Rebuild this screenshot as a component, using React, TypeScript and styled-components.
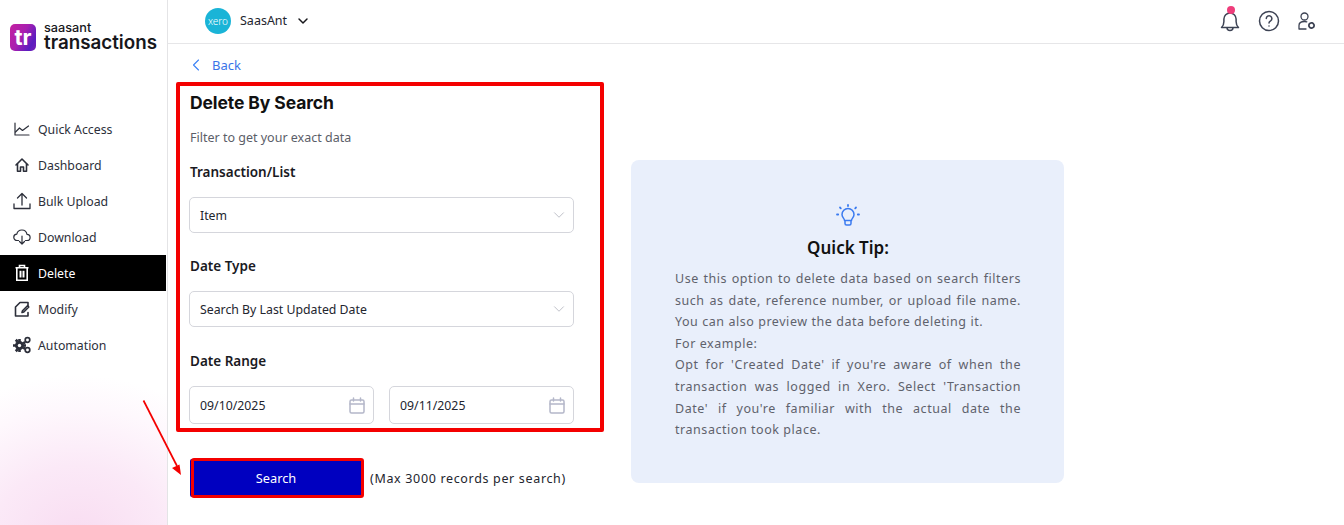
import styled, { createGlobalStyle } from "styled-components";
import { ReactNode } from "react";
import { ChevronDown, ChevronLeft } from "lucide-react";

const GlobalStyle = createGlobalStyle`
  html, body {
    margin: 0;
    padding: 0;
    background: #fff;
    font-family: "Noto Sans", "Open Sans", sans-serif;
    color: #1c1c22;
  }
  * { box-sizing: border-box; }
`;

const Page = styled.div`
  position: relative;
  display: flex;
  width: 1344px;
  height: 525px;
  overflow: hidden;
`;

const Sidebar = styled.aside`
  flex: 0 0 168px;
  display: flex;
  flex-direction: column;
  border-right: 1px solid #e4e4e6;
  background: radial-gradient(ellipse 190px 165px at 78px 540px, #f8dcf1 0%, #fbe9f7 45%, #fef8fd 80%, #fff 100%);
`;

const LogoRow = styled.div`
  display: flex;
  align-items: center;
  gap: 8px;
  height: 111px;
  padding: 0 0 37px 10px;
`;

const LogoMark = styled.div`
  display: flex;
  align-items: center;
  justify-content: center;
  width: 26px;
  height: 27px;
  padding-bottom: 1px;
  border-radius: 5px;
  background: linear-gradient(120deg, #c4209f 0%, #a81fb0 45%, #5a1dc0 80%, #7a1fb4 100%);
  color: #fff;
  font-family: Inter, sans-serif;
  font-weight: 700;
  font-size: 22px;
  line-height: 1;
`;

const LogoText = styled.div`
  display: flex;
  flex-direction: column;
  font-family: Inter, sans-serif;
  color: #17171c;
`;

const LogoSmall = styled.span`
  font-size: 12.7px;
  font-weight: 500;
  line-height: 10px;
`;

const LogoBig = styled.span`
  font-size: 18.8px;
  font-weight: 600;
  line-height: 19px;
`;

const Nav = styled.nav`
  display: flex;
  flex-direction: column;
`;

const NavItem = styled.div<{ $active?: boolean }>`
  display: flex;
  align-items: center;
  gap: 7px;
  height: 36px;
  margin-right: 1px;
  padding-left: 13px;
  font-size: 12.3px;
  background: ${(p) => (p.$active ? "#000" : "transparent")};
  color: ${(p) => (p.$active ? "#fff" : "#2c2f3a")};
`;

const NavIcon = styled.span`
  display: flex;
  align-items: center;
  justify-content: center;
  width: 18px;
  height: 18px;
`;

const Main = styled.main`
  flex: 1;
  display: flex;
  flex-direction: column;
  min-width: 0;
`;

const TopBar = styled.header`
  display: flex;
  align-items: center;
  justify-content: space-between;
  height: 44px;
  padding: 0 28px 2px 37px;
  border-bottom: 1px solid #e6e6e8;
`;

const OrgSwitch = styled.div`
  display: flex;
  align-items: center;
  font-size: 12.5px;
  color: #23252e;
`;

const XeroBadge = styled.div`
  display: flex;
  align-items: center;
  justify-content: center;
  width: 26px;
  height: 26px;
  margin-right: 9px;
  border-radius: 50%;
  background: #1ab4d7;
  color: #fff;
  font-size: 10px;
  font-weight: 300;
  line-height: 1;
`;

const OrgChevron = styled(ChevronDown)`
  margin-left: 8px;
`;

const TopActions = styled.div`
  display: flex;
  align-items: center;
  gap: 18px;
`;

const BellWrap = styled.div`
  position: relative;
  display: flex;
  width: 20px;
  height: 24px;
  margin-top: 1px;
`;

const BellDot = styled.span`
  position: absolute;
  top: -3px;
  left: 7px;
  width: 8px;
  height: 8px;
  border-radius: 50%;
  background: #ef3d7b;
`;

const Content = styled.div`
  display: flex;
  flex: 1;
  padding: 0 0 0 8px;
`;

const LeftColumn = styled.div`
  display: flex;
  flex-direction: column;
  width: 428px;
`;

const BackLink = styled.div`
  display: flex;
  align-items: center;
  gap: 6px;
  height: 38px;
  padding: 4px 0 0 10px;
  font-size: 13px;
  color: #3a74e8;
`;

const FormBox = styled.section`
  display: flex;
  flex-direction: column;
  height: 350px;
  padding: 4px 26px 0 9px;
  border: 4px solid #f40000;
  border-radius: 2px;
`;

const Title = styled.h1`
  margin: 0 0 0 1px;
  font-family: Inter, sans-serif;
  font-size: 17.5px;
  font-weight: 700;
  letter-spacing: -0.1px;
  line-height: 26px;
  color: #111;
`;

const Subtitle = styled.p`
  margin: 12px 0 0 1px;
  font-size: 12.5px;
  line-height: 20px;
  color: #5b5e68;
`;

const FieldLabel = styled.label<{ $gap: number }>`
  display: block;
  margin: ${(p) => p.$gap}px 0 0 1px;
  font-size: 13.5px;
  font-weight: 600;
  line-height: 20px;
  color: #1a1a1f;
`;

const Select = styled.div`
  display: flex;
  align-items: center;
  justify-content: space-between;
  height: 36px;
  margin-top: 15px;
  padding: 0 5px 0 10px;
  border: 1px solid #d5d6dc;
  border-radius: 5px;
  background: #fff;
  font-size: 12.3px;
  color: #23252e;
`;

const DateRow = styled.div`
  display: grid;
  grid-template-columns: 185px 185px;
  gap: 15px;
  margin-top: 15px;
`;

const DateInput = styled(Select)`
  height: 38px;
  margin-top: 0;
  padding-right: 8px;
`;

const SearchRow = styled.div`
  display: flex;
  align-items: center;
  gap: 6px;
  margin-top: 26px;
  padding-left: 15px;
`;

const SearchButton = styled.button`
  width: 173px;
  height: 40px;
  padding: 0 3px 0 0;
  border: 3px solid #f40000;
  border-radius: 3px;
  box-shadow: -2px 0 0 -1px #0000c0;
  background: #0000c0;
  color: #fff;
  font-family: inherit;
  font-size: 12.8px;
`;

const SearchNote = styled.span`
  font-size: 12.5px;
  letter-spacing: 0.66px;
  color: #23252e;
`;

const TipPanel = styled.aside`
  display: flex;
  flex-direction: column;
  align-items: center;
  width: 433px;
  height: 323px;
  margin: 116px 0 0 27px;
  padding: 44px 43px 0 44px;
  border-radius: 8px;
  background: #e9effb;
`;

const TipTitle = styled.h2`
  margin: 9px 0 0;
  font-size: 17px;
  font-weight: 600;
  line-height: 22px;
  color: #111;
`;

const TipBody = styled.p`
  margin: 9px 0 0;
  font-size: 12.5px;
  line-height: 21.6px;
  letter-spacing: 0.55px;
  text-align: justify;
  color: #5f626c;
`;

const ArrowLayer = styled.svg`
  position: absolute;
  left: 140px;
  top: 396px;
`;

const stroke = { fill: "none", stroke: "currentColor", strokeWidth: 1.2, strokeLinecap: "round", strokeLinejoin: "round" } as const;

const navItems: { label: string; icon: ReactNode; active?: boolean }[] = [
  {
    label: "Quick Access",
    icon: (
      <svg width="18" height="18" viewBox="0 0 18 18" {...stroke}>
        <path d="M2 3v12h14" />
        <path d="M2.500 12l4-4 3 2.500 6-4.500" />
      </svg>
    ),
  },
  {
    label: "Dashboard",
    icon: (
      <svg width="18" height="18" viewBox="0 0 18 18" {...stroke} strokeWidth={1.6}>
        <path d="M3 9l6-6 6 6" />
        <path d="M4.500 8v7.300h3V11h3v4.300h3V8" />
      </svg>
    ),
  },
  {
    label: "Bulk Upload",
    icon: (
      <svg width="18" height="18" viewBox="0 0 18 18" {...stroke} strokeWidth={1.3}>
        <path d="M1 12v4.500h16V12" />
        <path d="M9 13V1.500M4.500 6L9 1.500 13.500 6" />
      </svg>
    ),
  },
  {
    label: "Download",
    icon: (
      <svg width="18" height="18" viewBox="0 0 18 18" {...stroke}>
        <path d="M5.500 12.500H4.200a3.200 3.200 0 0 1-.4-6.400 5.200 5.200 0 0 1 10.200.2 3.100 3.100 0 0 1 0 6.200h-1.500" />
        <path d="M9 8v8M6.500 13.500L9 16l2.500-2.500" />
      </svg>
    ),
  },
  {
    label: "Delete",
    active: true,
    icon: (
      <svg width="18" height="18" viewBox="0 0 18 18" {...stroke} strokeWidth={1.6} strokeLinecap="butt" strokeLinejoin="miter">
        <path d="M2.500 3.800h13M6.500 3.500V1.500h5v2" />
        <path d="M3.800 4v12.200h10.400V4" />
        <path d="M7.500 6.800v6.600M10.500 6.800v6.600" strokeWidth={2} />
      </svg>
    ),
  },
  {
    label: "Modify",
    icon: (
      <svg width="18" height="18" viewBox="0 0 18 18" {...stroke} strokeWidth={1.6}>
        <path d="M15 6.500V2.500H7L2.500 7v9h12.500v-3.500" />
        <path d="M9 12.500l.5-1.800 5-5 1.300 1.300-5 5z" />
      </svg>
    ),
  },
  {
    label: "Automation",
    icon: (
      <svg width="18" height="18" viewBox="0 0 18 18" fill="#2c2f3a">
        <circle cx="6.500" cy="9.500" r="4.500" />
        <path d="M5.200 3h2.600v3H5.200zM5.200 13h2.600v3H5.200zM0 8.200h3v2.600H0zM10 8.200h3v2.600h-3z" />
        <path d="M1.800 4.700l1.900-1.900 2 2-1.900 1.900zM9.300 12.200l1.900-1.900 1.900 1.900-1.900 1.900zM1.800 14.300l1.900 1.900 2-2-1.900-1.900zM9.300 6.800l1.900 1.900 1.900-1.900-1.900-1.900z" />
        <circle cx="6.500" cy="9.500" r="1.700" fill="#fff" />
        <circle cx="14.500" cy="4" r="2.300" fill="none" stroke="#2c2f3a" strokeWidth="1.700" />
        <circle cx="14.500" cy="14" r="2.300" fill="none" stroke="#2c2f3a" strokeWidth="1.700" />
      </svg>
    ),
  },
];

function SelectChevron() {
  return <ChevronDown size={18} strokeWidth={1} color="#a9abb6" />;
}

function CalendarIcon() {
  return (
    <svg width="16" height="17" viewBox="0 0 16 17" fill="none" stroke="#b4b7c9" strokeWidth="1.500" strokeLinecap="round">
      <rect x="1" y="3" width="14" height="13" rx="1.500" />
      <path d="M1 7h14M4.500 1v3M11.500 1v3" />
    </svg>
  );
}

export default function App() {
  return (
    <>
      <GlobalStyle />
      <Page>
        <Sidebar>
          <LogoRow>
            <LogoMark>tr</LogoMark>
            <LogoText>
              <LogoSmall>saasant</LogoSmall>
              <LogoBig>transactions</LogoBig>
            </LogoText>
          </LogoRow>
          <Nav>
            {navItems.map((item) => (
              <NavItem key={item.label} $active={item.active}>
                <NavIcon>{item.icon}</NavIcon>
                {item.label}
              </NavItem>
            ))}
          </Nav>
        </Sidebar>
        <Main>
          <TopBar>
            <OrgSwitch>
              <XeroBadge>xero</XeroBadge>
              SaasAnt
              <OrgChevron size={16} strokeWidth={2.2} color="#17171c" />
            </OrgSwitch>
            <TopActions>
              <BellWrap>
                <svg width="20" height="24" viewBox="0 0 20 24" fill="none" stroke="#3d4354" strokeWidth="1.500" strokeLinejoin="round">
                  <path d="M1.500 18.500c1.600-1.400 2.400-3 2.400-6V10a6.100 6.100 0 0 1 12.200 0v2.500c0 3 .8 4.600 2.400 6z" />
                  <path d="M7 18.500a3 3 0 0 0 6 0" />
                </svg>
                <BellDot />
              </BellWrap>
              <svg width="22" height="22" viewBox="0 0 22 22" fill="none" stroke="#3d4354" strokeWidth="1.500" strokeLinecap="round">
                <circle cx="11" cy="11" r="9.500" />
                <path d="M8.300 8.600a2.800 2.800 0 1 1 4.300 2.300c-1 .6-1.600 1.100-1.600 2.100" />
                <path d="M11 16v.1" />
              </svg>
              <svg width="18" height="18" viewBox="0 0 18 18" fill="none" stroke="#3d4354" strokeWidth="1.300" strokeLinecap="round">
                <circle cx="6.500" cy="4.500" r="3.500" />
                <path d="M1 17v-3.500c0-2.500 2-4 5.500-4 1 0 1.700.1 2.300.3M1 17h7" />
                <circle cx="13.500" cy="13.500" r="2.600" strokeWidth="1.800" strokeDasharray="1.500 .6" />
              </svg>
            </TopActions>
          </TopBar>
          <Content>
            <LeftColumn>
              <BackLink>
                <ChevronLeft size={20} strokeWidth={1.3} color="#3b82f6" />
                Back
              </BackLink>
              <FormBox>
                <Title>Delete By Search</Title>
                <Subtitle>Filter to get your exact data</Subtitle>
                <FieldLabel $gap={14}>Transaction/List</FieldLabel>
                <Select>
                  Item
                  <SelectChevron />
                </Select>
                <FieldLabel $gap={23}>Date Type</FieldLabel>
                <Select>
                  Search By Last Updated Date
                  <SelectChevron />
                </Select>
                <FieldLabel $gap={24}>Date Range</FieldLabel>
                <DateRow>
                  <DateInput>
                    09/10/2025
                    <CalendarIcon />
                  </DateInput>
                  <DateInput>
                    09/11/2025
                    <CalendarIcon />
                  </DateInput>
                </DateRow>
              </FormBox>
              <SearchRow>
                <SearchButton>Search</SearchButton>
                <SearchNote>(Max 3000 records per search)</SearchNote>
              </SearchRow>
            </LeftColumn>
            <TipPanel>
              <svg width="26" height="24" viewBox="0 0 26 24" fill="none" stroke="#3b7bf0" strokeWidth="1.500" strokeLinecap="round" strokeLinejoin="round">
                <path d="M9.500 16.500c0-2-2.500-3-2.500-6a6 6 0 0 1 12 0c0 3-2.500 4-2.500 6z" />
                <path d="M10 17v2.500a1.500 1.500 0 0 0 1.500 1.500h3a1.500 1.500 0 0 0 1.500-1.500V17" />
                <path d="M13 1v1M5 3.500l.8.8M21 3.500l-.8.8M2 10.500h1.200M22.800 10.500H24" strokeWidth="1.800" />
              </svg>
              <TipTitle>Quick Tip:</TipTitle>
              <TipBody>
                Use this option to delete data based on search filters such as date, reference number, or upload file
                name. You can also preview the data before deleting it.
                <br />
                For example:
                <br />
                Opt for 'Created Date' if you're aware of when the transaction was logged in Xero. Select 'Transaction
                Date' if you're familiar with the actual date the transaction took place.
              </TipBody>
            </TipPanel>
          </Content>
        </Main>
        <ArrowLayer width="50" height="84" viewBox="0 0 50 84">
          <path d="M3.500 4.500L37 70" stroke="#f40000" strokeWidth="1.700" />
          <path d="M41 79L32 72l7.500-3.500z" fill="#f40000" />
        </ArrowLayer>
      </Page>
    </>
  );
}
